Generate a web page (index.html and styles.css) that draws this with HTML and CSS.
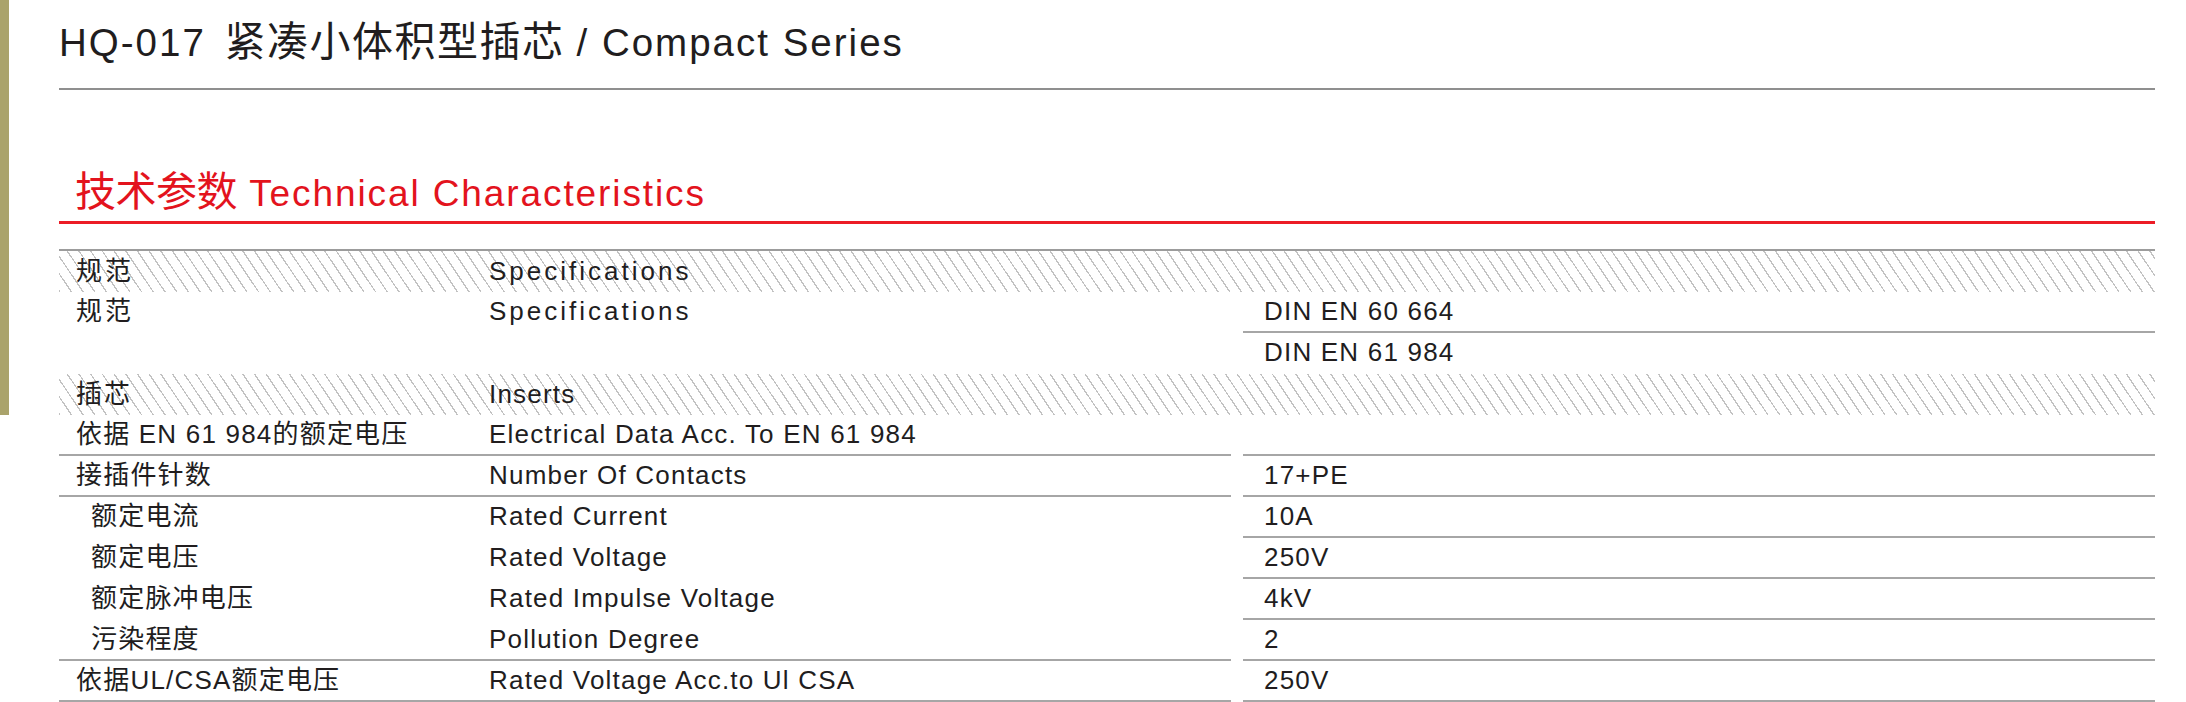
FILE: index.html
```html
<!DOCTYPE html>
<html lang="zh">
<head>
<meta charset="utf-8">
<title>HQ-017 Compact Series</title>
<link rel="stylesheet" href="styles.css">
</head>
<body>
<div class="page">
  <div class="edge"></div>
  <main class="sheet">
    <h1 class="title">HQ-017 <span class="cjk">紧凑小体积型插芯</span>/ Compact Series</h1>
    <h2 class="section"><span class="cjk">技术参数</span> Technical Characteristics</h2>

    <div class="table">
      <div class="row hatch">
        <div class="c1 wide">规范</div>
        <div class="c2 wide">Specifications</div>
        <div class="c3"></div>
      </div>

      <div class="row tall">
        <div class="c1 wide">规范</div>
        <div class="c2 wide">Specifications</div>
        <div class="c3 stack">
          <div class="sub-cell ln">DIN EN 60 664</div>
          <div class="sub-cell">DIN EN 61 984</div>
        </div>
      </div>

      <div class="row hatch">
        <div class="c1 mid">插芯</div>
        <div class="c2">Inserts</div>
        <div class="c3"></div>
      </div>

      <div class="row">
        <div class="c1 ln">依据 EN 61 984的额定电压</div>
        <div class="c2 ln">Electrical Data Acc. To EN 61 984</div>
        <div class="c3 ln"></div>
      </div>
      <div class="row">
        <div class="c1 ln">接插件针数</div>
        <div class="c2 ln">Number Of Contacts</div>
        <div class="c3 ln">17+PE</div>
      </div>
      <div class="row">
        <div class="c1 indent">额定电流</div>
        <div class="c2">Rated Current</div>
        <div class="c3 ln">10A</div>
      </div>
      <div class="row">
        <div class="c1 indent">额定电压</div>
        <div class="c2">Rated Voltage</div>
        <div class="c3 ln">250V</div>
      </div>
      <div class="row">
        <div class="c1 indent">额定脉冲电压</div>
        <div class="c2">Rated Impulse Voltage</div>
        <div class="c3 ln">4kV</div>
      </div>
      <div class="row">
        <div class="c1 indent ln">污染程度</div>
        <div class="c2 ln">Pollution Degree</div>
        <div class="c3 ln">2</div>
      </div>
      <div class="row">
        <div class="c1 ln">依据UL/CSA额定电压</div>
        <div class="c2 ln">Rated Voltage Acc.to Ul CSA</div>
        <div class="c3 ln">250V</div>
      </div>
    </div>
  </main>
</div>
</body>
</html>
```
FILE: styles.css
```css
html, body {
  margin: 0;
  padding: 0;
  background: #ffffff;
}

body {
  font-family: "Liberation Sans", "Noto Sans CJK SC", sans-serif;
  color: #211d1e;
}

.page {
  display: flex;
  align-items: flex-start;
  width: 2186px;
  height: 702px;
  overflow: hidden;
}

.edge {
  flex: none;
  width: 9px;
  height: 415px;
  background: #aaa36b;
}

.sheet {
  flex: none;
  margin-left: 50px;
  width: 2096px;
}

/* page title */
.title {
  margin: 0;
  font-weight: normal;
  font-size: 38.5px;
  letter-spacing: 2px;
  line-height: 46px;
  height: 68px;
  padding-top: 20px;
  border-bottom: 2px solid #8f8f8f;
  white-space: nowrap;
}

.title .cjk {
  font-family: "Noto Sans CJK SC", sans-serif;
  font-size: 41px;
  line-height: 0;
  letter-spacing: 1.5px;
  margin-left: 6px;
  margin-right: 12px;
}

/* red section heading */
.section {
  margin: 0;
  font-weight: normal;
  color: #e3131d;
  font-size: 37px;
  letter-spacing: 1.9px;
  line-height: 48px;
  height: 48px;
  padding: 80px 0 3px 16px;
  border-bottom: 3px solid #ec1c26;
  white-space: nowrap;
}

.section .cjk {
  font-family: "Noto Sans CJK SC", sans-serif;
  font-size: 41px;
  line-height: 0;
  letter-spacing: -0.5px;
}

/* data table */
.table {
  margin-top: 25px;
  border-top: 2px solid #9c9c9c;
  font-size: 26px;
  letter-spacing: 1.2px;
  line-height: 39px;
}

.row {
  display: flex;
}

.row > div {
  height: 41px;
  box-sizing: border-box;
  white-space: nowrap;
}

.row.tall > div {
  height: 82px;
}

.hatch {
  line-height: 41px;
  background: repeating-linear-gradient(56deg, #c2c2c2 0, #c2c2c2 1.3px, transparent 1.3px, transparent 9.7px);
}

.c1 {
  flex: none;
  width: 430px;
  padding-left: 17px;
}

.c1.indent {
  padding-left: 32px;
}

.c2 {
  flex: none;
  width: 742px;
}

.c3 {
  flex: none;
  width: 912px;
  margin-left: 12px;
  padding-left: 21px;
}

.c3.stack {
  padding-left: 0;
}

.sub-cell {
  height: 41px;
  box-sizing: border-box;
  padding-left: 21px;
}

.ln {
  border-bottom: 2px solid #a6a6a6;
}

.wide {
  letter-spacing: 3px;
}

.mid {
  letter-spacing: 2px;
}
```
